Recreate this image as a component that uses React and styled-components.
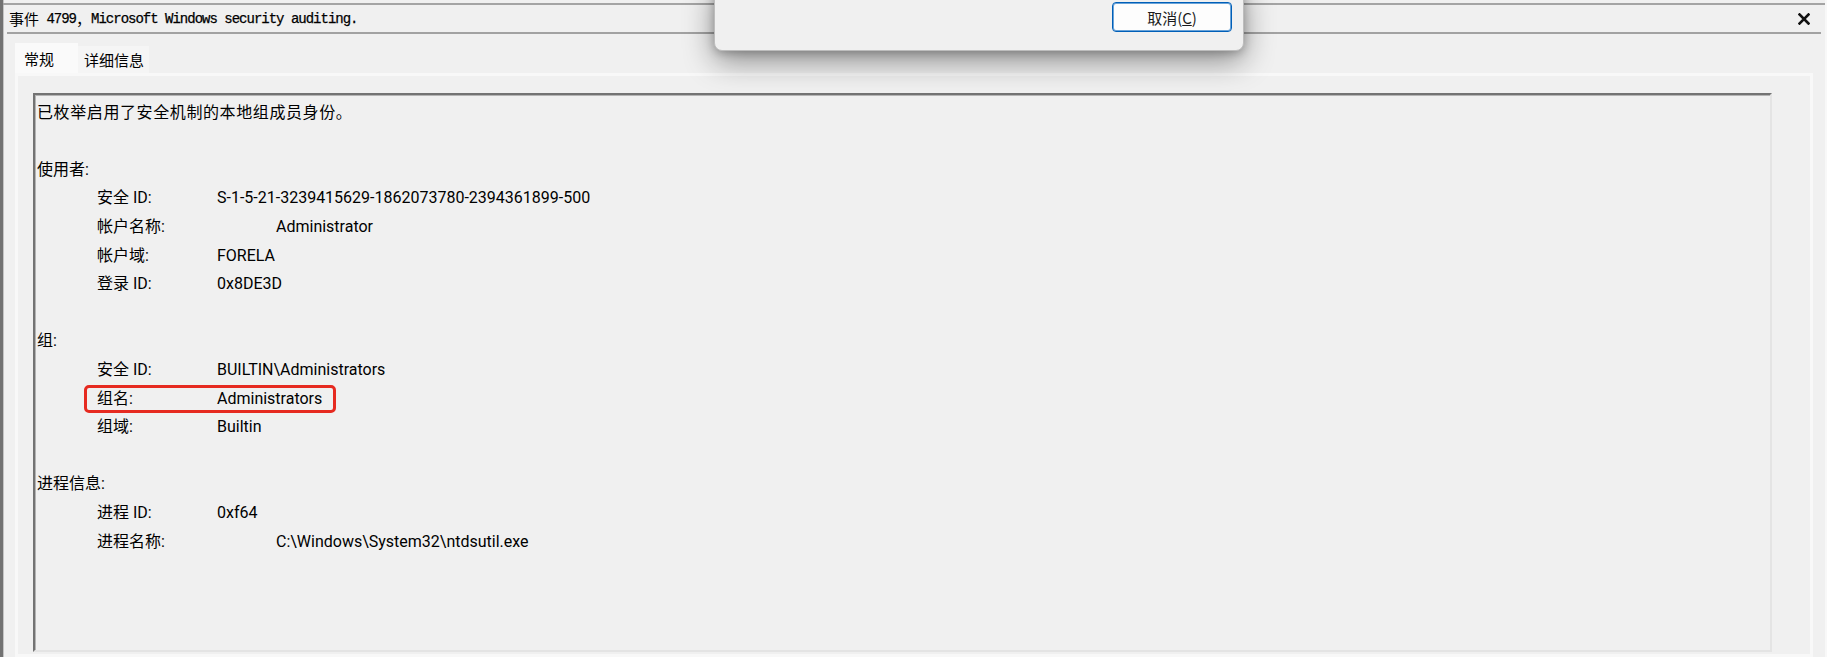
import React from "react";
import styled, { createGlobalStyle } from "styled-components";

const Global = createGlobalStyle`
  html, body {
    margin: 0;
    padding: 0;
    background: #f0f0f0;
    overflow: hidden;
  }
  #root { height: 657px; }
`;

const Window = styled.div`
  position: relative;
  box-sizing: border-box;
  height: 657px;
  width: 1827px;
  display: flex;
  flex-direction: column;
  background: #f0f0f0;
  border-left: 3px solid #727272;
  border-right: 2px solid #f8f8f8;
  box-shadow: inset 1px 0 0 #c4c4c4;
  overflow: hidden;
`;

const TopRule = styled.div`
  margin-top: 3px;
  height: 2px;
  background: #a4a4a4;
`;

const TitleBar = styled.div`
  height: 27px;
  display: flex;
  align-items: center;
  justify-content: space-between;
  padding: 0 15px 0 6px;
`;

const Title = styled.div`
  display: flex;
  align-items: center;
  color: #000;
  white-space: pre;
`;

const TitleCjk = styled.span`
  font-family: "Noto Sans CJK SC", sans-serif;
  font-size: 15px;
  line-height: 20px;
`;

const TitleMono = styled.span`
  font-family: "Liberation Mono", monospace;
  font-size: 14px;
  letter-spacing: -1px;
  line-height: 20px;
  -webkit-text-stroke: 0.25px #000;
`;

const CloseIcon = styled.svg`
  width: 12px;
  height: 12px;
  display: block;
`;

const TitleRule = styled.div`
  margin: 0 4px;
  height: 2px;
  background: #a2a2a2;
`;

const TabStrip = styled.div`
  margin-top: 9px;
  padding-left: 12px;
  display: flex;
  align-items: flex-end;
`;

const Tab = styled.div`
  box-sizing: border-box;
  height: ${(p) => (p.$active ? 30 : 27)}px;
  width: ${(p) => p.$w}px;
  padding-left: ${(p) => (p.$active ? 9 : 6)}px;
  display: flex;
  align-items: center;
  background: ${(p) => (p.$active ? "#fafafa" : "#f5f5f5")};
  font-family: "Noto Sans CJK SC", sans-serif;
  font-size: 15px;
  color: #000;
`;

const Panel = styled.div`
  flex: 1;
  display: flex;
  flex-direction: column;
  margin: 0 12px;
  border: 3px solid #f8f8f8;
  padding: 17px 38px 2px 15px;
  background: #f0f0f0;
`;

const TextBox = styled.div`
  flex: 1;
  box-sizing: border-box;
  border-style: solid;
  border-width: 2px;
  border-color: #737373 #e4e4e4 #e4e4e4 #737373;
  box-shadow: inset 1px 1px 0 #b4b4b4;
  padding: 3.7px 0 0 2px;
  font-family: Roboto, "Noto Sans CJK SC", sans-serif;
  font-size: 16px;
  color: #000;
`;

const Line = styled.div`
  height: 28.6px;
  line-height: 28.6px;
  white-space: pre;
  letter-spacing: ${(p) => (p.$lead ? "0.6px" : "0")};
`;

const FieldRow = styled.div`
  height: 28.6px;
  line-height: 28.6px;
  padding-left: 60px;
  display: flex;
  white-space: pre;
`;

const Pair = styled.div`
  position: relative;
  display: inline-flex;

  ${(p) =>
    p.$mark &&
    `
    &::after {
      content: "";
      position: absolute;
      top: 0;
      bottom: 0;
      left: -13.5px;
      right: -14px;
      border: 3.5px solid #e62a20;
      border-radius: 5px;
      pointer-events: none;
    }
  `}
`;

const Label = styled.span`
  width: ${(p) => (p.$wide ? 179 : 120)}px;
  flex: none;
`;

const Value = styled.span``;

const Dialog = styled.div`
  position: absolute;
  top: -20px;
  left: 711px;
  width: 530px;
  height: 71px;
  box-sizing: border-box;
  display: flex;
  justify-content: flex-end;
  align-items: flex-start;
  padding: 21px 11px 0 0;
  background: #f0f0f0;
  border: 1px solid #bdbdbd;
  border-radius: 8px;
  box-shadow: 0 10px 30px rgba(0, 0, 0, 0.42), 0 2px 8px rgba(0, 0, 0, 0.22);
`;

const Button = styled.div`
  box-sizing: border-box;
  width: 120px;
  height: 30px;
  display: flex;
  align-items: center;
  justify-content: center;
  background: #fdfdfd;
  border: 1px solid #005fb8;
  box-shadow: inset 0 0 0 1px #6aa3d8;
  border-radius: 4px;
  font-family: "Noto Sans CJK SC", sans-serif;
  font-size: 15px;
  color: #1b1b1b;
`;

const Mnemonic = styled.span`
  text-decoration: underline;
`;

const lines = [
  { t: "text", v: "已枚举启用了安全机制的本地组成员身份。", lead: true },
  { t: "blank" },
  { t: "text", v: "使用者:" },
  { t: "field", l: "安全 ID:", v: "S-1-5-21-3239415629-1862073780-2394361899-500" },
  { t: "field", l: "帐户名称:", v: "Administrator", wide: true },
  { t: "field", l: "帐户域:", v: "FORELA" },
  { t: "field", l: "登录 ID:", v: "0x8DE3D" },
  { t: "blank" },
  { t: "text", v: "组:" },
  { t: "field", l: "安全 ID:", v: "BUILTIN\\Administrators" },
  { t: "field", l: "组名:", v: "Administrators", mark: true },
  { t: "field", l: "组域:", v: "Builtin" },
  { t: "blank" },
  { t: "text", v: "进程信息:" },
  { t: "field", l: "进程 ID:", v: "0xf64" },
  { t: "field", l: "进程名称:", v: "C:\\Windows\\System32\\ntdsutil.exe", wide: true },
];

export default function App() {
  return (
    <>
      <Global />
      <Window>
        <TopRule />
        <TitleBar>
          <Title>
            <TitleCjk>事件</TitleCjk>
            <TitleMono> 4799</TitleMono>
            <TitleCjk>，</TitleCjk>
            <TitleMono>Microsoft Windows security auditing.</TitleMono>
          </Title>
          <CloseIcon viewBox="0 0 12 12">
            <path
              d="M1.5 1.5 L10.5 10.5 M10.5 1.5 L1.5 10.5"
              stroke="#111"
              strokeWidth="2.6"
              strokeLinecap="square"
              fill="none"
            />
          </CloseIcon>
        </TitleBar>
        <TitleRule />
        <TabStrip>
          <Tab $active $w={63}>常规</Tab>
          <Tab $w={71}>详细信息</Tab>
        </TabStrip>
        <Panel>
          <TextBox>
            {lines.map((ln, i) => {
              if (ln.t === "blank") return <Line key={i} />;
              if (ln.t === "text")
                return (
                  <Line key={i} $lead={ln.lead}>
                    {ln.v}
                  </Line>
                );
              return (
                <FieldRow key={i}>
                  <Pair $mark={ln.mark}>
                    <Label $wide={ln.wide}>{ln.l}</Label>
                    <Value>{ln.v}</Value>
                  </Pair>
                </FieldRow>
              );
            })}
          </TextBox>
        </Panel>
        <Dialog>
          <Button>
            取消(<Mnemonic>C</Mnemonic>)
          </Button>
        </Dialog>
      </Window>
    </>
  );
}
